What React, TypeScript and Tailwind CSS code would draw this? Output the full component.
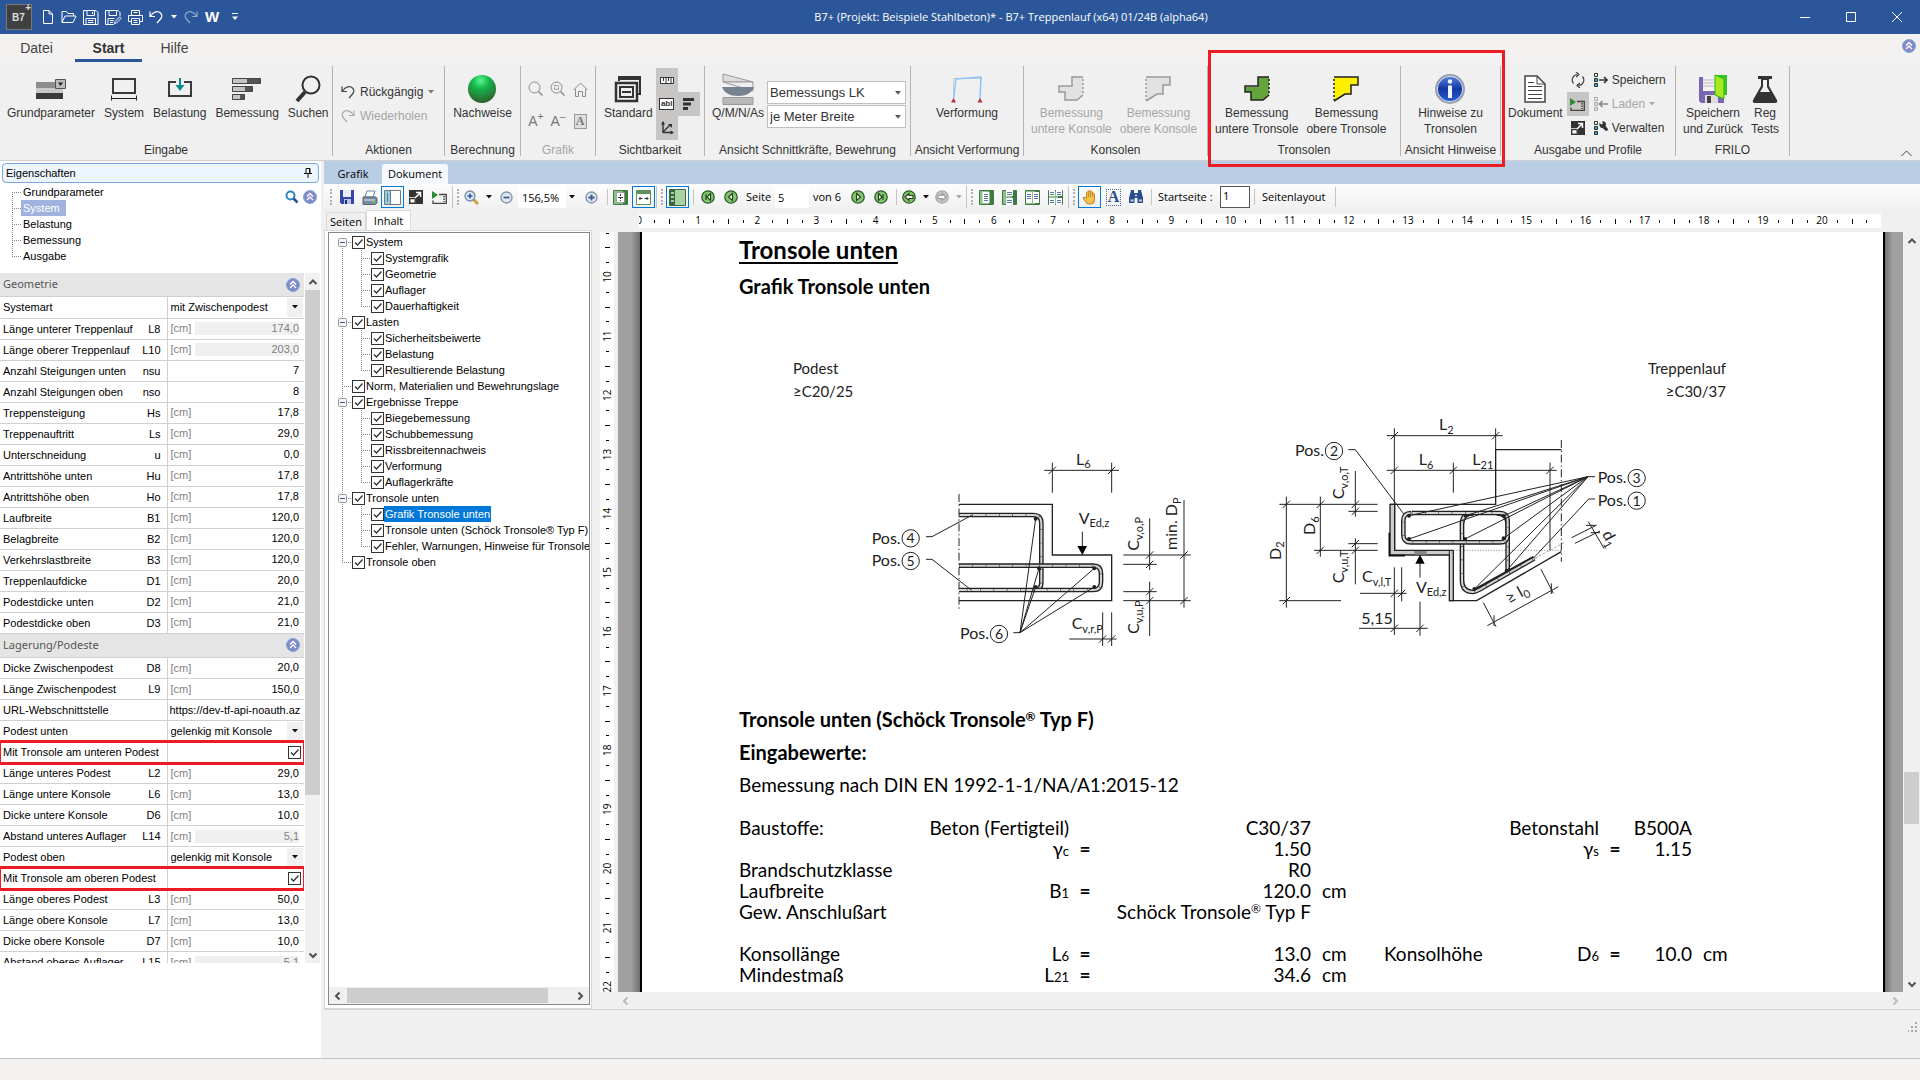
import type { ReactNode } from "react";

type PropertyRow = {
  label: string;
  symbol?: string;
  unit?: string;
  value?: string;
  disabled?: boolean;
  kind?: "number" | "select" | "text" | "check";
  mark?: boolean;
};

const GEOMETRY: PropertyRow[] = [
  { label: "Systemart", value: "mit Zwischenpodest", kind: "select" },
  { label: "Länge unterer Treppenlauf", symbol: "L8", unit: "[cm]", value: "174,0", disabled: true },
  { label: "Länge oberer Treppenlauf", symbol: "L10", unit: "[cm]", value: "203,0", disabled: true },
  { label: "Anzahl Steigungen unten", symbol: "nsu", value: "7" },
  { label: "Anzahl Steigungen oben", symbol: "nso", value: "8" },
  { label: "Treppensteigung", symbol: "Hs", unit: "[cm]", value: "17,8" },
  { label: "Treppenauftritt", symbol: "Ls", unit: "[cm]", value: "29,0" },
  { label: "Unterschneidung", symbol: "u", unit: "[cm]", value: "0,0" },
  { label: "Antrittshöhe unten", symbol: "Hu", unit: "[cm]", value: "17,8" },
  { label: "Antrittshöhe oben", symbol: "Ho", unit: "[cm]", value: "17,8" },
  { label: "Laufbreite", symbol: "B1", unit: "[cm]", value: "120,0" },
  { label: "Belagbreite", symbol: "B2", unit: "[cm]", value: "120,0" },
  { label: "Verkehrslastbreite", symbol: "B3", unit: "[cm]", value: "120,0" },
  { label: "Treppenlaufdicke", symbol: "D1", unit: "[cm]", value: "20,0" },
  { label: "Podestdicke unten", symbol: "D2", unit: "[cm]", value: "21,0" },
  { label: "Podestdicke oben", symbol: "D3", unit: "[cm]", value: "21,0" },
];

const SUPPORTS: PropertyRow[] = [
  { label: "Dicke Zwischenpodest", symbol: "D8", unit: "[cm]", value: "20,0" },
  { label: "Länge Zwischenpodest", symbol: "L9", unit: "[cm]", value: "150,0" },
  { label: "URL-Webschnittstelle", value: "https://dev-tf-api-noauth.az", kind: "text" },
  { label: "Podest unten", value: "gelenkig mit Konsole", kind: "select" },
  { label: "Mit Tronsole am unteren Podest", kind: "check", mark: true },
  { label: "Länge unteres Podest", symbol: "L2", unit: "[cm]", value: "29,0" },
  { label: "Länge untere Konsole", symbol: "L6", unit: "[cm]", value: "13,0" },
  { label: "Dicke untere Konsole", symbol: "D6", unit: "[cm]", value: "10,0" },
  { label: "Abstand unteres Auflager", symbol: "L14", unit: "[cm]", value: "5,1", disabled: true },
  { label: "Podest oben", value: "gelenkig mit Konsole", kind: "select" },
  { label: "Mit Tronsole am oberen Podest", kind: "check", mark: true },
  { label: "Länge oberes Podest", symbol: "L3", unit: "[cm]", value: "50,0" },
  { label: "Länge obere Konsole", symbol: "L7", unit: "[cm]", value: "13,0" },
  { label: "Dicke obere Konsole", symbol: "D7", unit: "[cm]", value: "10,0" },
  { label: "Abstand oberes Auflager", symbol: "L15", unit: "[cm]", value: "5,1", disabled: true },
];

const CONTENTS: { label: string; children?: string[] }[] = [
  { label: "System", children: ["Systemgrafik", "Geometrie", "Auflager", "Dauerhaftigkeit"] },
  { label: "Lasten", children: ["Sicherheitsbeiwerte", "Belastung", "Resultierende Belastung"] },
  { label: "Norm, Materialien und Bewehrungslage" },
  {
    label: "Ergebnisse Treppe",
    children: ["Biegebemessung", "Schubbemessung", "Rissbreitennachweis", "Verformung", "Auflagerkräfte"],
  },
  {
    label: "Tronsole unten",
    children: [
      "Grafik Tronsole unten",
      "Tronsole unten (Schöck Tronsole® Typ F)",
      "Fehler, Warnungen, Hinweise für Tronsole",
    ],
  },
  { label: "Tronsole oben" },
];

const SELECTED = "Grafik Tronsole unten";
const NAV = ["Grundparameter", "System", "Belastung", "Bemessung", "Ausgabe"];
const CM = 59.15;

/* ---------- small shared pieces ---------- */

function Svg({ w, h, box, children }: { w: number; h: number; box?: string; children: ReactNode }) {
  return (
    <svg width={w} height={h} viewBox={box ?? `0 0 ${w} ${h}`} fill="none" className="shrink-0" aria-hidden="true">
      {children}
    </svg>
  );
}

function Caret({ color = "#111" }: { color?: string }) {
  return (
    <Svg w={6} h={4}>
      <path d="M0 0h6L3 3.6z" fill={color} />
    </Svg>
  );
}

function Chevron({ dir, color = "#505050" }: { dir: "up" | "down" | "left" | "right"; color?: string }) {
  const d = {
    up: "M1.5 7L5 3.5 8.5 7",
    down: "M1.5 3.5L5 7l3.5-3.5",
    left: "M6.5 1.5L3 5l3.5 3.5",
    right: "M3.5 1.5L7 5 3.5 8.5",
  }[dir];
  return (
    <Svg w={10} h={10}>
      <path d={d} stroke={color} strokeWidth="2" />
    </Svg>
  );
}

function CollapseIcon() {
  return (
    <Svg w={14} h={14}>
      <circle cx="7" cy="7" r="6.5" fill="#8288c8" stroke="#7fa6d8" />
      <path d="M4 6.5l3-3 3 3M4 10l3-3 3 3" stroke="#fff" strokeWidth="1.3" />
    </Svg>
  );
}

function Check({ id, label }: { id?: string; label?: string }) {
  return (
    <span className="grid h-[13px] w-[13px] shrink-0">
      <input
        id={id}
        type="checkbox"
        defaultChecked
        aria-label={label}
        className="peer col-start-1 row-start-1 h-[13px] w-[13px] appearance-none border border-[#333] bg-white"
      />
      <svg
        viewBox="0 0 13 13"
        className="pointer-events-none invisible col-start-1 row-start-1 h-[13px] w-[13px] peer-checked:visible"
        fill="none"
        aria-hidden="true"
      >
        <path d="M3 6.5L5.5 9l5-5.5" stroke="#333" strokeWidth="1.3" />
      </svg>
    </span>
  );
}

/* ---------- title bar ---------- */

function TitleButton({ label, className, children }: { label: string; className: string; children: ReactNode }) {
  return (
    <button type="button" aria-label={label} className={`flex h-6 items-center justify-center ${className}`}>
      {children}
    </button>
  );
}

function TitleBar() {
  return (
    <header className="grid h-[34px] shrink-0 grid-cols-[1fr_auto_1fr] items-center bg-[#2b579a] text-white">
      <div className="flex items-center pl-[6px]">
        <span className="relative flex h-[26px] w-[26px] items-center border border-[#777] bg-[#404040] pl-[5px] text-[10px] font-bold text-[#ddd]">
          B7
          <span className="absolute right-0 -top-[3px] text-[10px] leading-[12px]">+</span>
        </span>
        <TitleButton label="Neu" className="ml-[8px] w-[16px]">
          <Svg w={12} h={16}>
            <path d="M1.5 1.5h5.5l3.5 3.5v9.5h-9zM7 1.5V5h3.5" stroke="#fff" />
          </Svg>
        </TitleButton>
        <TitleButton label="Öffnen" className="ml-[5px] w-[16px]">
          <Svg w={16} h={14}>
            <path d="M1 12.5V1.5h4.5l1.5 2h5.5V6M1 12.5L4 6h11l-3 6.5z" stroke="#fff" />
          </Svg>
        </TitleButton>
        <TitleButton label="Speichern" className="ml-[6px] w-[16px]">
          <Svg w={16} h={15}>
            <path d="M.5.5h12.5l2 2v12H.5zM4 .5v5h7.5v-5M3 14.5V8.5h9.5v6M5 10.5h5.5M5 12.5h5.5M9.500 2v2" stroke="#fff" />
          </Svg>
        </TitleButton>
        <TitleButton label="Speichern unter" className="ml-[6px] w-[17px]">
          <Svg w={17} h={15}>
            <path d="M9 14.5H.5V.5h12.5l2 2v4M4 .5v5h7.5v-5M3 14.5V8.5h6.5M5 10.5h3.5M5 12.5h3" stroke="#fff" />
            <path d="M9.5 13.5l.5-2 4.5-4.5 1.5 1.5-4.5 4.500z" stroke="#fff" />
          </Svg>
        </TitleButton>
        <TitleButton label="Drucken" className="ml-[5px] w-[16px]">
          <Svg w={15} h={15}>
            <path d="M3.5 5V.5h8V5M3.5 11.5H.5v-6h14v6h-3M3.5 8.5h8v6h-8zM5.5 10.5h4M5.5 12.5h4M5.5 2.5h4" stroke="#fff" />
          </Svg>
        </TitleButton>
        <TitleButton label="Rückgängig" className="ml-[5px] w-[16px]">
          <Svg w={14} h={14}>
            <path d="M1 1.5v5h5M1.5 6C4.5 1.5 9 .5 11.5 3c3 3 .5 6-3.5 10" stroke="#fff" strokeWidth="1.2" />
          </Svg>
        </TitleButton>
        <TitleButton label="Rückgängig-Liste" className="ml-[4px] w-[12px]">
          <Caret color="#fff" />
        </TitleButton>
        <TitleButton label="Wiederholen" className="ml-[3px] w-[16px]">
          <Svg w={14} h={14}>
            <path d="M13 1.5v5H8M12.5 6C9.5 1.5 5 .5 2.5 3c-3 3-.5 6 3.5 10" stroke="#8ea8cf" strokeWidth="1.2" />
          </Svg>
        </TitleButton>
        <TitleButton label="Word" className="ml-[5px] w-[16px] text-[15px] font-bold">
          W
        </TitleButton>
        <TitleButton label="Symbolleiste anpassen" className="ml-[9px] w-[12px]">
          <Svg w={6} h={8}>
            <path d="M0 .5h6" stroke="#fff" />
            <path d="M0 3.5h6L3 7z" fill="#fff" />
          </Svg>
        </TitleButton>
      </div>
      <h1 className="pl-[102px] font-['Open_Sans','Noto_Sans',sans-serif] text-[11px] leading-4">
        B7+ (Projekt: Beispiele Stahlbeton)* - B7+ Treppenlauf (x64) 01/24B (alpha64)
      </h1>
      <div className="flex justify-end">
        <TitleButton label="Minimieren" className="w-[46px]">
          <Svg w={10} h={10}>
            <path d="M0 5.5h10" stroke="#fff" />
          </Svg>
        </TitleButton>
        <TitleButton label="Maximieren" className="w-[46px]">
          <Svg w={10} h={10}>
            <path d="M.5.5h9v9h-9z" stroke="#fff" />
          </Svg>
        </TitleButton>
        <TitleButton label="Schließen" className="w-[46px]">
          <Svg w={10} h={10}>
            <path d="M0 0l10 10M10 0L0 10" stroke="#fff" />
          </Svg>
        </TitleButton>
      </div>
    </header>
  );
}

/* ---------- ribbon ---------- */

function Group({ title, className, dim, children }: { title: string; className: string; dim?: boolean; children: ReactNode }) {
  return (
    <section className={`flex h-[90px] shrink-0 flex-col justify-between border-r border-[#b4b4b4] ${className}`}>
      <div className="flex items-start pt-px">{children}</div>
      <h2 className={`h-[12px] text-center text-[12px] leading-[12px] whitespace-nowrap ${dim ? "text-[#a8a6a4]" : ""}`}>{title}</h2>
    </section>
  );
}

function BigButton({ icon, lines, dim }: { icon: ReactNode; lines: string[]; dim?: boolean }) {
  return (
    <button
      type="button"
      disabled={dim}
      className={`flex shrink-0 flex-col items-center px-[3px] text-[12px] leading-4 whitespace-nowrap ${dim ? "text-[#a8a6a4]" : ""}`}
    >
      <span className="flex h-[38px] items-center pt-[6px]">{icon}</span>
      {lines.map((line) => (
        <span key={line}>{line}</span>
      ))}
    </button>
  );
}

function SmallButton({ label, active, className = "h-6 w-[22px]", children }: { label: string; active?: boolean; className?: string; children: ReactNode }) {
  return (
    <button
      type="button"
      aria-label={label}
      className={`flex items-center justify-center ${className} ${active ? "bg-[#c8c6c4]" : ""}`}
    >
      {children}
    </button>
  );
}

function ProfileIcon({ kind }: { kind: "out" | "in" | "tool" }) {
  const fill = kind === "in" ? "#ddd" : "#35a6e6";
  const stroke = kind === "in" ? "#aaa" : "#333";
  return (
    <Svg w={14} h={14}>
      <path d="M.5.5h3v3h-3z" stroke={stroke} />
      <path d="M.5 5.5h3v3h-3zM.5 10.5h3v3h-3z" fill={fill} stroke={stroke} />
      {kind === "out" && <path d="M5 7h8M10 4l3 3-3 3" stroke="#333" strokeWidth="1.6" />}
      {kind === "in" && <path d="M5 7h9M8.5 4l-3 3 3 3" stroke="#888" strokeWidth="1.6" />}
      {kind === "tool" && (
        <path d="M5.500 4.500a3 3 0 0 1 0-2.500l2 1.500L9 2.500 8 .5a3 3 0 0 1 3.500 4.500l2.500 3q0 2-2 2L8.500 7a3 3 0 0 1-3-2.500z" fill="#333" />
      )}
    </Svg>
  );
}

function ExportIcon({ size = 14 }: { size?: number }) {
  return (
    <Svg w={size} h={size} box="0 0 14 14">
      <path d="M0 0h14v14H7V7H0z" fill="#333" />
      <path d="M.7 8.500h5.500v4.800H.7z" fill="#fff" stroke="#333" strokeWidth="1.4" />
      <path d="M6 8l5-5M7 2.5h4.5V7" stroke="#fff" strokeWidth="1.5" />
    </Svg>
  );
}

function PlayFilmIcon() {
  return (
    <Svg w={15} h={13}>
      <path d="M0 0l6 4-6 4z" fill="#2c8a34" />
      <path d="M7 3.500h7.300v9H1V9.500" stroke="#444" strokeWidth="1.3" />
      <path d="M12 5v6" stroke="#444" strokeWidth="1.500" strokeDasharray="1.500 1" />
    </Svg>
  );
}

function RibbonSelect({ label, options }: { label: string; options: string[] }) {
  return (
    <span className="grid items-center">
      <select
        aria-label={label}
        className="col-start-1 row-start-1 h-[23px] w-[139px] appearance-none border border-[#c0c0c0] bg-white pl-[2px] text-[13px]"
      >
        {options.map((o) => (
          <option key={o}>{o}</option>
        ))}
      </select>
      <span className="pointer-events-none col-start-1 row-start-1 justify-self-end pr-[5px]">
        <Caret color="#555" />
      </span>
    </span>
  );
}

function ConsoleIcon({ fill, stroke, upper }: { fill: string; stroke: string; upper?: boolean }) {
  return (
    <Svg w={26} h={26}>
      {upper ? (
        <>
          <path d="M1 1h24v8h-7v9h-6L1 25z" fill={fill} />
          <path d="M1 1h24v8h-7v9h-6L1 25" stroke={stroke} strokeWidth="1.5" />
          <path d="M1 3v21" stroke={stroke} strokeWidth="1.5" strokeDasharray="2 2" />
        </>
      ) : (
        <>
          <path d="M25 1H14v10H1v5h6v8h12l6-5z" fill={fill} />
          <path d="M25 1H14v9H1v6h6v8h12l6-5" stroke={stroke} strokeWidth="1.5" />
          <path d="M25 3v16" stroke={stroke} strokeWidth="1.5" strokeDasharray="2 2" />
        </>
      )}
    </Svg>
  );
}

function Ribbon() {
  return (
    <div className="flex h-[99px] shrink-0 items-start border-b border-[#cfcfcf] bg-[#f0f0f0] pt-[4px] text-[#333]">
      <Group title="Eingabe" className="w-[333px]">
        <div className="flex gap-[3px] pl-[4px]">
          <BigButton
            lines={["Grundparameter"]}
            icon={
              <Svg w={31} h={20}>
                <path d="M0 3h27v6H0z" fill="#8e8e8e" />
                <path d="M0 9h27v6H0z" fill="#c9c9c9" />
                <path d="M0 14h27v6H0z" fill="#3a3a3a" />
                <path d="M19.5.5h10v9h-10z" fill="#bbb" stroke="#555" />
                <path d="M22 3.5h5L24.5 7z" fill="#222" />
              </Svg>
            }
          />
          <BigButton
            lines={["System"]}
            icon={
              <Svg w={26} h={24}>
                <path d="M2 2h22v14H2z" stroke="#3a3a3a" strokeWidth="2" />
                <path d="M0 21.5h26M.5 18.5v5M25.5 18.5v5" stroke="#222" />
              </Svg>
            }
          />
          <BigButton
            lines={["Belastung"]}
            icon={
              <Svg w={26} h={24}>
                <path d="M9 5H2v14h22V5h-7" stroke="#3a3a3a" strokeWidth="2" />
                <path d="M13 1v9" stroke="#0e8b8b" strokeWidth="2" />
                <path d="M8.5 8h9L13 14z" fill="#0e8b8b" />
              </Svg>
            }
          />
          <BigButton
            lines={["Bemessung"]}
            icon={
              <Svg w={30} h={24}>
                <path d="M.5 1.5h28v5H.5zM.5 9.5h20v5H.5zM.5 17.5h12v5H.5z" fill="#555" stroke="#444" />
                <path d="M1 2h14v4H1zM1 10h12v4H1zM1 18h7v4H1z" fill="#c4c4c4" />
              </Svg>
            }
          />
          <BigButton
            lines={["Suchen"]}
            icon={
              <Svg w={28} h={28}>
                <circle cx="17" cy="10" r="8.5" stroke="#333" strokeWidth="2" />
                <path d="M11 17l-8 9" stroke="#333" strokeWidth="4" />
              </Svg>
            }
          />
        </div>
      </Group>

      <Group title="Aktionen" className="w-[112px]">
        <div className="flex flex-col pt-[13px] pl-[8px] text-[12px]">
          <button type="button" className="flex h-6 items-center gap-[5px]">
            <Svg w={14} h={14}>
              <path d="M1 1.5v5h5M1.5 6C4.5 1.5 9 .5 11.5 3c3 3 .5 6-3.5 10" stroke="#444" strokeWidth="1.2" />
            </Svg>
            Rückgängig
            <Caret color="#777" />
          </button>
          <button type="button" disabled className="flex h-6 items-center gap-[5px] text-[#a8a6a4]">
            <Svg w={14} h={14}>
              <path d="M13 1.5v5H8M12.5 6C9.5 1.5 5 .5 2.5 3c-3 3-.5 6 3.5 10" stroke="#aaa" strokeWidth="1.2" />
            </Svg>
            Wiederholen
          </button>
        </div>
      </Group>

      <Group title="Berechnung" className="w-[76px]">
        <div className="flex flex-1 justify-center">
          <BigButton
            lines={["Nachweise"]}
            icon={
              <Svg w={30} h={30}>
                <defs>
                  <radialGradient id="ball" cx=".45" cy=".2" r=".85">
                    <stop offset="0" stopColor="#5cf58f" />
                    <stop offset=".35" stopColor="#15b64c" />
                    <stop offset="1" stopColor="#31552b" />
                  </radialGradient>
                </defs>
                <circle cx="15" cy="15" r="14" fill="url(#ball)" />
              </Svg>
            }
          />
        </div>
      </Group>

      <Group title="Grafik" dim className="w-[75px]">
        <div className="grid grid-cols-3 pt-[6px] pl-[4px]">
          <SmallButton label="Zoom" className="h-[32px] w-[22px]">
            <Svg w={16} h={16}>
              <circle cx="6.5" cy="6.5" r="5.5" stroke="#8a8a8a" />
              <path d="M10.5 10.5l4 4" stroke="#8a8a8a" strokeWidth="1.5" />
            </Svg>
          </SmallButton>
          <SmallButton label="Alles zoomen" className="h-[32px] w-[22px]">
            <Svg w={16} h={16}>
              <circle cx="6.5" cy="6.5" r="5.5" stroke="#8a8a8a" />
              <path d="M4.5 4.5h4v4h-4z" stroke="#8a8a8a" strokeDasharray="2 1" />
              <path d="M10.5 10.5l4 4" stroke="#8a8a8a" strokeWidth="1.5" />
            </Svg>
          </SmallButton>
          <SmallButton label="Startansicht" className="h-[32px] w-[22px]">
            <Svg w={15} h={15}>
              <path d="M.5 8L7.5 1l7 7M2.5 7v7.5h3V9.5h4v5h3V7" stroke="#8a8a8a" />
            </Svg>
          </SmallButton>
          <SmallButton label="Schrift größer" className="h-[32px] w-[22px] text-[14px] text-[#777]">
            A<sup>+</sup>
          </SmallButton>
          <SmallButton label="Schrift kleiner" className="h-[32px] w-[22px] text-[14px] text-[#777]">
            A<sup>–</sup>
          </SmallButton>
          <SmallButton label="Schriftart" className="h-[32px] w-[22px]">
            <span className="h-[15px] w-[13px] border border-[#999] bg-[#ddd] font-['Liberation_Serif',serif] text-[12px] leading-[13px] font-bold text-[#777]">
              A
            </span>
          </SmallButton>
        </div>
      </Group>

      <Group title="Sichtbarkeit" className="w-[109px]">
        <div className="flex pl-[5px]">
          <BigButton
            lines={["Standard"]}
            icon={
              <Svg w={28} h={28}>
                <path d="M5 6V2h21v17h-3" stroke="#333" strokeWidth="2" />
                <path d="M4 1h23v4H4z" fill="#333" />
                <path d="M2 8h21v18H2z" stroke="#333" strokeWidth="2.5" />
                <path d="M6 12h13v10H6zM8 17h9" stroke="#333" strokeWidth="2" />
              </Svg>
            }
          />
          <div className="flex flex-col pt-px">
            <SmallButton label="Bemaßung" active>
              <Svg w={14} h={7}>
                <path d="M.5.5h13v6H.5z" fill="#fff" stroke="#333" />
                <path d="M3.500 0v4M6 0v7M8.500 0v4M11 0v7" stroke="#333" />
              </Svg>
            </SmallButton>
            <div className="flex">
              <SmallButton label="Beschriftung" active>
                <span className="border border-[#333] bg-white px-px text-[8px] leading-[10px] font-bold">abl</span>
              </SmallButton>
              <SmallButton label="Balken" active>
                <Svg w={11} h={12}>
                  <path d="M0 0h11v3H0zM0 4.5h8v3H0zM0 9h5v3H0z" fill="#333" />
                </Svg>
              </SmallButton>
            </div>
            <SmallButton label="Achsen" active>
              <Svg w={14} h={14}>
                <path d="M3 1v10.5h10M3 11l7-7" stroke="#333" strokeWidth="1.4" />
                <path d="M1 3.5L3 0l2 3.5zM10.5 9.5L14 11.5l-3.5 2zM8 3h4v4z" fill="#333" />
              </Svg>
            </SmallButton>
          </div>
        </div>
      </Group>

      <Group title="Ansicht Schnittkräfte, Bewehrung" className="w-[206px]">
        <div className="flex pl-[4px]">
          <BigButton
            lines={["Q/M/N/As"]}
            icon={
              <Svg w={33} h={32}>
                <path d="M1 9V1l30 8z" fill="#ddd" stroke="#999" />
                <path d="M1 9h30v9z" fill="#eee" stroke="#999" />
                <path d="M0 14h32c-2 6-8 9-16 9S2 20 0 14z" fill="#76828f" />
                <path d="M1 24.500h30v7H1z" fill="#b9b9b9" stroke="#999" />
              </Svg>
            }
          />
          <div className="flex flex-col gap-px pt-[14px]">
            <RibbonSelect label="Lastkombination" options={["Bemessungs LK"]} />
            <RibbonSelect label="Bezug" options={["je Meter Breite"]} />
          </div>
        </div>
      </Group>

      <Group title="Ansicht Verformung" className="w-[113px]">
        <div className="flex flex-1 justify-center">
          <BigButton
            lines={["Verformung"]}
            icon={
              <Svg w={34} h={27}>
                <path d="M3.5 24V2.5h27V24" stroke="#ccc" />
                <path d="M3.5 24L6 3l25-2-1 23" stroke="#8cc4fa" strokeWidth="1.5" />
                <path d="M1 26.5l2.5-4.5L6 26.5zM27.5 26.5l2.5-4.5 2.5 4.5z" fill="#b33" />
              </Svg>
            }
          />
        </div>
      </Group>

      <Group title="Konsolen" className="w-[184px]">
        <div className="flex gap-[2px] pl-[4px]">
          <BigButton dim lines={["Bemessung", "untere Konsole"]} icon={<ConsoleIcon fill="#e2e2e2" stroke="#999" />} />
          <BigButton dim lines={["Bemessung", "obere Konsole"]} icon={<ConsoleIcon upper fill="#e2e2e2" stroke="#999" />} />
        </div>
      </Group>

      <div className="relative flex">
        <Group title="Tronsolen" className="w-[193px]">
          <div className="flex gap-[2px] pl-[4px]">
            <BigButton lines={["Bemessung", "untere Tronsole"]} icon={<ConsoleIcon fill="#65a43b" stroke="#222" />} />
            <BigButton lines={["Bemessung", "obere Tronsole"]} icon={<ConsoleIcon upper fill="#fff000" stroke="#222" />} />
          </div>
        </Group>
        <Group title="Ansicht Hinweise" className="w-[100px]">
          <div className="flex flex-1 justify-center">
            <BigButton
              lines={["Hinweise zu", "Tronsolen"]}
              icon={
                <Svg w={32} h={32}>
                  <defs>
                    <linearGradient id="info" x1="0" y1="0" x2="0" y2="1">
                      <stop offset="0" stopColor="#5c88e0" />
                      <stop offset=".5" stopColor="#1238a4" />
                      <stop offset="1" stopColor="#2f62d8" />
                    </linearGradient>
                  </defs>
                  <circle cx="16" cy="16" r="14" fill="url(#info)" stroke="#9a9fa8" strokeWidth="2" />
                  <circle cx="16" cy="16" r="12.700" stroke="#dfe6f4" />
                  <circle cx="16" cy="8.5" r="2.2" fill="#eef1f8" />
                  <path d="M14 12.500h4V25h-4z" fill="#eef1f8" />
                </Svg>
              }
            />
          </div>
        </Group>
        <div className="pointer-events-none absolute -right-[4px] -top-[16px] left-0 h-[117px] border-[3px] border-[#ed1c24]" />
      </div>

      <Group title="Ausgabe und Profile" className="w-[175px]">
        <div className="flex pl-[4px]">
          <BigButton
            lines={["Dokument"]}
            icon={
              <Svg w={22} h={28}>
                <path d="M1 1h12l8 8v18H1z" fill="#fff" stroke="#444" strokeWidth="1.5" />
                <path d="M13 1v8h8M4 7.5h6M4 11.5h14M4 15.5h14M4 19.5h14M4 23.5h14" stroke="#444" />
              </Svg>
            }
          />
          <div className="flex flex-col pt-px pl-px">
            <SmallButton label="Aktualisieren">
              <Svg w={14} h={16}>
                <path d="M2.5 11.5a5.5 5.5 0 0 1 4-9M11.5 4.5a5.5 5.5 0 0 1-4 9M5 0l3 2.5L5 5M9 11l-3 2.5L9 16" stroke="#444" strokeWidth="1.2" />
              </Svg>
            </SmallButton>
            <SmallButton label="Vorschau" active>
              <PlayFilmIcon />
            </SmallButton>
            <SmallButton label="Exportieren">
              <ExportIcon />
            </SmallButton>
          </div>
          <div className="flex flex-col pt-px pl-[5px] text-[12px]">
            <button type="button" className="flex h-6 items-center gap-[4px]">
              <ProfileIcon kind="out" />
              Speichern
            </button>
            <button type="button" disabled className="flex h-6 items-center gap-[4px] text-[#a8a6a4]">
              <ProfileIcon kind="in" />
              Laden
              <Caret color="#aaa" />
            </button>
            <button type="button" className="flex h-6 items-center gap-[4px]">
              <ProfileIcon kind="tool" />
              Verwalten
            </button>
          </div>
        </div>
      </Group>

      <Group title="FRILO" className="w-[114px]">
        <div className="flex gap-[2px] pl-[4px]">
          <BigButton
            lines={["Speichern", "und Zurück"]}
            icon={
              <Svg w={30} h={30}>
                <path d="M1 3h25v26H3l-2-2z" fill="#7a66b0" />
                <path d="M5 3h13v14H5z" fill="#f2f2f2" />
                <path d="M5 6h12M5 9h12M5 12h12" stroke="#bbb" />
                <path d="M7 21h13v8H7z" fill="#ddd" />
                <path d="M9 22h4v7H9z" fill="#444" />
                <path d="M17 1h12v20h-4V6z" fill="#35c524" />
                <path d="M17 1l9 4v20l-9-4z" fill="#a6ea1e" stroke="#2fb51e" />
              </Svg>
            }
          />
          <BigButton
            lines={["Reg", "Tests"]}
            icon={
              <Svg w={26} h={28}>
                <path d="M6 1h14v3H6z" fill="#333" />
                <path d="M9 3v8L1 25q-1 3 2 3h20q3 0 2-3L17 11V3z" fill="#333" />
                <path d="M11 5h4v7l3 5H8l3-5z" fill="#f0f0f0" />
              </Svg>
            }
          />
        </div>
      </Group>

      <button type="button" aria-label="Menüband verkleinern" className="ml-auto self-end pr-[8px] pb-[3px]">
        <Svg w={11} h={7}>
          <path d="M.5 6L5.5 1l5 5" stroke="#444" />
        </Svg>
      </button>
    </div>
  );
}

/* ---------- property panel ---------- */

function PropertyTable({ rows }: { rows: PropertyRow[] }) {
  return (
    <table className="w-full table-fixed border-collapse">
      <colgroup>
        <col className="w-[167px]" />
        <col />
      </colgroup>
      <tbody>
        {rows.map((row) => {
          const id = `p-${row.label.replace(/\s/g, "-")}`;
          return (
            <tr key={row.label} className={`h-[21px] ${row.mark ? "outline-[3px] -outline-offset-1 outline-[#ed1c24]" : ""}`}>
              <th scope="row" className="h-[21px] border-r border-b border-[#d0d0d0] p-0 text-left font-normal">
                <label htmlFor={id} className="flex justify-between pr-[6px] pl-[3px] leading-[20px] whitespace-nowrap">
                  <span>{row.label}</span>
                  <span>{row.symbol}</span>
                </label>
              </th>
              <td className="h-[21px] border-b border-[#d0d0d0] p-0">
                {row.kind === "select" ? (
                  <span className="grid h-[20px] items-center">
                    <select id={id} className="col-start-1 row-start-1 h-[20px] appearance-none pl-[3px]">
                      <option>{row.value}</option>
                    </select>
                    <span className="pointer-events-none col-start-1 row-start-1 mr-px flex h-[19px] w-[16px] items-center justify-center justify-self-end bg-[#f0f0f0]">
                      <Caret />
                    </span>
                  </span>
                ) : row.kind === "check" ? (
                  <span className="flex justify-end pr-[3px]">
                    <Check id={id} />
                  </span>
                ) : (
                  <span className={`flex items-center gap-[4px] ${row.kind === "text" ? "pl-[2px]" : "pr-[5px] pl-[3px]"}`}>
                    {row.unit && <span className="text-[#808080]">{row.unit}</span>}
                    <input
                      id={id}
                      defaultValue={row.value}
                      disabled={row.disabled}
                      className={`h-[13px] w-0 min-w-0 flex-1 leading-[13px] ${
                        row.kind === "text" ? "text-left" : "text-right"
                      } ${row.disabled ? "bg-[#f0f0f0] text-[#808080]" : ""}`}
                    />
                  </span>
                )}
              </td>
            </tr>
          );
        })}
      </tbody>
    </table>
  );
}

function SectionHeader({ title }: { title: string }) {
  return (
    <h3 className="flex h-[24px] items-center justify-between border-b border-[#d0d0d0] bg-[#e5e5e5] pr-[4px] pl-[3px] font-['Noto_Sans',sans-serif] text-[11px] text-[#555]">
      {title}
      <button type="button" aria-label={`${title} einklappen`}>
        <CollapseIcon />
      </button>
    </h3>
  );
}

function PropertyPanel() {
  return (
    <aside className="flex w-[321px] shrink-0 flex-col bg-white">
      <div className="mx-[2px] mt-[2px] flex h-[20px] shrink-0 items-center justify-between rounded-sm border border-[#7da7e0] bg-[#edf5fe] pr-[6px] pl-[3px]">
        <h2>Eigenschaften</h2>
        <button type="button" aria-label="Anheften">
          <Svg w={8} h={10}>
            <path d="M2 .5h4v5H2zM0 5.5h8M4 5.5V10M5.5 1v5" stroke="#111" />
          </Svg>
        </button>
      </div>
      <div className="flex h-[90px] shrink-0 items-start pt-px">
        <nav className="flex-1">
          <ul>
            {NAV.map((item, i) => (
              <li key={item} className="flex h-4 items-center pl-[12px]">
                <Svg w={9} h={16}>
                  <path
                    d={`M.5 ${i === 0 ? 8 : 0}V${i === NAV.length - 1 ? 8 : 16}M0 8.5h9`}
                    stroke="#888"
                    strokeDasharray="1 1"
                  />
                </Svg>
                <a
                  href={`#${item}`}
                  className={`h-4 px-[2px] leading-4 ${item === "System" ? "bg-[#a0b3de] pr-[6px] text-white" : ""}`}
                >
                  {item}
                </a>
              </li>
            ))}
          </ul>
        </nav>
        <div className="flex gap-[4px] pt-[6px] pr-[4px]">
          <button type="button" aria-label="Suchen">
            <Svg w={14} h={14}>
              <circle cx="5.5" cy="5.5" r="4" stroke="#2f86c6" strokeWidth="2" />
              <path d="M8.5 8.5l4 4" stroke="#2b4f8f" strokeWidth="2.5" />
            </Svg>
          </button>
          <button type="button" aria-label="Alle einklappen">
            <CollapseIcon />
          </button>
        </div>
      </div>
      <div className="flex min-h-0 flex-1 pb-[95px]">
        <div className="w-[304px] overflow-hidden">
          <SectionHeader title="Geometrie" />
          <PropertyTable rows={GEOMETRY} />
          <SectionHeader title="Lagerung/Podeste" />
          <PropertyTable rows={SUPPORTS} />
        </div>
        <div className="ml-px flex w-[15px] flex-col items-center bg-[#f0f0f0]">
          <span className="flex h-[17px] items-center">
            <Chevron dir="up" />
          </span>
          <span className="min-h-0 w-full flex-1">
            <span className="block h-[77%] bg-[#cdcdcd]" />
          </span>
          <span className="flex h-[17px] items-center">
            <Chevron dir="down" />
          </span>
        </div>
      </div>
    </aside>
  );
}

/* ---------- document toolbar ---------- */

function Tool({ label, active, className = "mx-[1px]", children }: { label: string; active?: boolean; className?: string; children: ReactNode }) {
  return (
    <button
      type="button"
      aria-label={label}
      className={`flex h-[22px] w-[23px] shrink-0 items-center justify-center ${className} ${
        active ? "border border-[#0078d7]" : ""
      }`}
    >
      {children}
    </button>
  );
}

function CaretTool({ label, dim }: { label: string; dim?: boolean }) {
  return (
    <button type="button" aria-label={label} className="flex h-[22px] w-[12px] items-center justify-center">
      <Caret color={dim ? "#aaa" : "#111"} />
    </button>
  );
}

function Sep() {
  return <span className="mx-[4px] h-[16px] w-px bg-[#c4c4c4]" />;
}

function Grip() {
  return (
    <span className="ml-[1px] flex items-center gap-[4px]">
      <span className="h-[22px] w-px bg-[#c4c4c4]" />
      <span className="h-[16px] border-l-2 border-dotted border-[#b0b0b0]" />
    </span>
  );
}

function GreenSquare({ children }: { children?: ReactNode }) {
  return (
    <Svg w={15} h={15}>
      <rect width="15" height="15" rx="1" fill="#3f7a45" />
      <path d="M1 1h9v13H1z" fill="#8fc08c" />
      {children}
    </Svg>
  );
}

function GreenRound({ d, dim }: { d: string; dim?: boolean }) {
  return (
    <Svg w={14} h={14}>
      <circle cx="7" cy="7" r="6.2" fill={dim ? "#c4c4c4" : "#83c56c"} stroke={dim ? "#aaa" : "#2d5c2c"} strokeWidth="1.300" />
      <path d={d} fill="#fff" stroke={dim ? "#999" : "#1f3f1f"} strokeWidth="1.100" />
    </Svg>
  );
}

function ZoomRound({ plus }: { plus?: boolean }) {
  return (
    <Svg w={13} h={13}>
      <circle cx="6.5" cy="6.5" r="5.5" fill="#dfe6f0" stroke="#8393ab" strokeWidth="1.3" />
      <path d={plus ? "M3.5 6.5h6M6.5 3.5v6" : "M3.5 6.5h6"} stroke="#3d5a94" strokeWidth="1.8" />
    </Svg>
  );
}

function DocumentToolbar() {
  return (
    <div className="flex h-[26px] shrink-0 items-center bg-linear-to-b from-[#fdfdfd] to-[#f0f0f0] pl-[6px] font-['Open_Sans','Noto_Sans',sans-serif] text-[11px]">
      <span className="h-[16px] border-l-2 border-dotted border-[#b0b0b0]" />
      <Tool label="Speichern" className="ml-[3px]">
        <Svg w={14} h={14}>
          <path d="M0 0h14v14H1.5L0 12.5z" fill="#3846a8" />
          <path d="M3 0h8v7H3z" fill="#e9edfa" />
          <path d="M4 9h7v5H4z" fill="#b9c2e6" />
          <path d="M5 10h2v4H5z" fill="#222c70" />
        </Svg>
      </Tool>
      <Tool label="Drucken" className="">
        <Svg w={16} h={15}>
          <path d="M5 1h8l-2 6H3z" fill="#fff" stroke="#6c86a8" />
          <path d="M1 7h13l1 2v4l-2 1.500H1z" fill="#7d8c9c" stroke="#56677a" />
          <path d="M2 10h11" stroke="#dfe6ee" />
          <path d="M10 12h3" stroke="#58d046" strokeWidth="1.5" />
        </Svg>
      </Tool>
      <Tool label="Navigation" active className="">
        <Svg w={17} h={15}>
          <path d="M.5.5h16v14H.5z" fill="#fff" stroke="#777" />
          <path d="M1 1h5v13H1z" fill="#8ed0ea" />
          <path d="M6.5 1v13M3.5 3v9" stroke="#777" />
        </Svg>
      </Tool>
      <Tool label="Exportieren" className="">
        <ExportIcon />
      </Tool>
      <Tool label="Vorschau" className="ml-[1px]">
        <PlayFilmIcon />
      </Tool>
      <Grip />
      <Tool label="Zoom" className="ml-[1px]">
        <Svg w={15} h={15}>
          <path d="M9 9l5 5" stroke="#d2a33c" strokeWidth="3" />
          <circle cx="6" cy="6" r="5" fill="#dbe6f3" stroke="#7a8ba5" strokeWidth="1.3" />
          <path d="M3.5 6h5M6 3.5v5" stroke="#2b5aa6" strokeWidth="1.5" />
        </Svg>
      </Tool>
      <CaretTool label="Zoomliste" />
      <Tool label="Verkleinern" className="">
        <ZoomRound />
      </Tool>
      <input aria-label="Zoomstufe" defaultValue="156,5%" className="h-[22px] w-[48px] bg-white pl-[4px]" />
      <CaretTool label="Zoomstufen" />
      <Tool label="Vergrößern" className="ml-[2px]">
        <ZoomRound plus />
      </Tool>
      <Sep />
      <Tool label="Ganze Seite" className="-ml-[3px]">
        <GreenSquare>
          <path d="M3.5 2.5h8v10h-8z" fill="#fff" stroke="#777" strokeDasharray="1 1" />
          <path d="M7.5 4v7M5 7.5h5" stroke="#333" strokeDasharray="2 1" />
        </GreenSquare>
      </Tool>
      <Tool label="Seitenbreite" active className="">
        <Svg w={15} h={15}>
          <rect width="15" height="15" rx="1" fill="#5c915e" />
          <path d="M1 4h13v10H1z" fill="#fff" />
          <path d="M3 8.5h3.5M8.5 8.5H12M4.5 7L3 8.5 4.5 10M10.5 7L12 8.5 10.5 10" stroke="#333" />
        </Svg>
      </Tool>
      <Grip />
      <Tool label="Gliederung" active className="ml-[3px]">
        <Svg w={17} h={17}>
          <path d="M.5.5h16v16H.5z" fill="#a9d3a2" stroke="#3d6d3e" />
          <path d="M1 1h5v15H1z" fill="#356937" />
          <path d="M2 4h3M2 8h3M2 12h3" stroke="#cfe7cb" strokeWidth="1.5" />
        </Svg>
      </Tool>
      <Sep />
      <Tool label="Erste Seite" className="-ml-[2px]">
        <GreenRound d="M5 4v6M9.5 3.5L6 7l3.5 3.5z" />
      </Tool>
      <Tool label="Vorige Seite" className="">
        <GreenRound d="M8.5 3.5L4.5 7l4 3.5z" />
      </Tool>
      <label htmlFor="page" className="ml-[4px] w-[29px]">
        Seite
      </label>
      <input id="page" defaultValue="5" className="h-[22px] w-[34px] bg-white pl-[3px]" />
      <span className="ml-[4px] w-[33px] whitespace-nowrap">von 6</span>
      <Tool label="Nächste Seite" className="">
        <GreenRound d="M5.5 3.5l4 3.5-4 3.5z" />
      </Tool>
      <Tool label="Letzte Seite" className="">
        <GreenRound d="M9 4v6M4.5 3.5L8 7l-3.5 3.5z" />
      </Tool>
      <Sep />
      <Tool label="Zurück" className="-ml-[4px]">
        <GreenRound d="M3 7l4-3.5v2h4v3H7v2z" />
      </Tool>
      <CaretTool label="Verlauf zurück" />
      <Tool label="Vor" className="-ml-[2px]">
        <GreenRound dim d="M11 7L7 3.5v2H3v3h4v2z" />
      </Tool>
      <CaretTool label="Verlauf vor" dim />
      <Grip />
      <Tool label="Einzelseite" className="ml-[2px]">
        <GreenSquare>
          <path d="M3.5 2h7v11h-7z" fill="#fff" />
          <path d="M5 4.5h4M5 6.5h4M5 8.5h4M5 10.5h4" stroke="#5a79a8" />
        </GreenSquare>
      </Tool>
      <Tool label="Fortlaufend" className="">
        <GreenSquare>
          <path d="M4 0h7v6H4zM4 8h7v7H4z" fill="#fff" />
          <path d="M5 2.5h5M5 4.5h5M5 10.5h5M5 12.5h5" stroke="#5a79a8" />
        </GreenSquare>
      </Tool>
      <Tool label="Doppelseite" className="">
        <GreenSquare>
          <path d="M1 2h6v11H1zM8 2h6v11H8z" fill="#fff" />
          <path d="M2 4.5h4M2 6.5h4M2 8.5h4M9 4.5h4M9 6.5h4M9 8.5h4" stroke="#5a79a8" />
        </GreenSquare>
      </Tool>
      <Tool label="Doppelseite fortlaufend" className="">
        <GreenSquare>
          <path d="M1 0h6v6H1zM8 0h6v6H8zM1 8h6v7H1zM8 8h6v7H8z" fill="#fff" />
          <path d="M2 2.5h4M2 4.5h4M9 2.5h4M9 4.5h4M2 10.5h4M9 10.5h4M2 12.5h4M9 12.5h4" stroke="#5a79a8" />
        </GreenSquare>
      </Tool>
      <Grip />
      <Tool label="Hand" active className="ml-[3px]">
        <Svg w={15} h={16}>
          <path
            d="M4.5 9V3.5q1-1.5 2 0V2q1-1.5 2 0v1q1-1.5 2 0v2q1-1.5 2 0v6q0 4-4 4H7Q4.5 15 3 12L1 9q.5-1.5 2-.5z"
            fill="#f2c14c"
            stroke="#b9832a"
          />
          <path d="M6.5 4v4M8.5 3v5M10.5 5v3" stroke="#b9832a" strokeWidth=".8" />
        </Svg>
      </Tool>
      <Tool label="Text auswählen" className="ml-[1px]">
        <span className="flex h-[17px] w-[15px] items-center justify-center border border-dotted border-[#4c6d9c] font-['Liberation_Serif',serif] text-[16px] leading-[16px] font-bold text-[#274d8e]">
          A
        </span>
      </Tool>
      <Tool label="Suchen" className="-ml-px">
        <Svg w={16} h={14}>
          <path d="M3 0h3v3h4V0h3l2 8v5H9.5V8h-3v5H1V8z" fill="#2b4d8d" />
          <path d="M2.5 9.5h3v2h-3zM11 9.5h3v2h-3zM7 4.500h2v2H7z" fill="#b4cbec" />
        </Svg>
      </Tool>
      <Sep />
      <label htmlFor="start" className="ml-[2px] w-[62px]">
        Startseite :
      </label>
      <input id="start" defaultValue="1" className="h-[22px] w-[30px] border border-[#555] bg-white pb-[3px] pl-[2px]" />
      <Sep />
      <button type="button" className="px-[3px]">
        Seitenlayout
      </button>
      <span className="ml-[6px] h-[20px] w-px bg-[#c4c4c4]" />
    </div>
  );
}

/* ---------- contents tree ---------- */

function TreeLines({ path, boxed }: { path: string; boxed?: boolean }) {
  return (
    <Svg w={19} h={16}>
      <path d={path} stroke="#888" strokeDasharray="1 1" />
      {boxed && (
        <>
          <rect x="5.5" y="4.5" width="8" height="8" rx="1" fill="#f4f4f4" stroke="#999" />
          <path d="M7 8.5h5" stroke="#3b5fa8" />
        </>
      )}
    </Svg>
  );
}

function ContentsTree() {
  return (
    <ul className="flex-1 overflow-hidden pt-px text-[11px]">
      {CONTENTS.map((node, i) => {
        const last = i === CONTENTS.length - 1;
        const trunk = `M9.5 ${i === 0 ? 8 : 0}V${last ? 8 : 16}M9 8.5h10`;
        return (
          <li key={node.label}>
            <div className="flex h-4 items-center pl-[4px]">
              <TreeLines path={trunk} boxed={!!node.children} />
              <Check label={node.label} />
              <span className="px-px whitespace-nowrap">{node.label}</span>
            </div>
            {node.children && (
              <ul>
                {node.children.map((child, j) => (
                  <li key={child} className="flex h-4 items-center pl-[4px]">
                    <TreeLines path="M9.5 0V16" />
                    <TreeLines path={`M9.5 0V${j === node.children!.length - 1 ? 8 : 16}M9 8.5h10`} />
                    <Check label={child} />
                    <span
                      className={`h-4 px-px leading-4 whitespace-nowrap ${child === SELECTED ? "bg-[#0078d7] text-white" : ""}`}
                    >
                      {child}
                    </span>
                  </li>
                ))}
              </ul>
            )}
          </li>
        );
      })}
    </ul>
  );
}

function ContentsPanel() {
  return (
    <div className="flex w-[268px] shrink-0 flex-col">
      <div role="tablist" className="flex h-[20px] items-end pl-[2px] font-['Open_Sans',sans-serif] text-[11px]">
        <button type="button" role="tab" aria-selected="false" className="h-[18px] w-[40px] border border-b-0 border-[#d9d9d9] text-center leading-[17px]">
          Seiten
        </button>
        <button type="button" role="tab" aria-selected="true" className="h-[20px] w-[45px] border border-b-0 border-[#d9d9d9] bg-white leading-[17px]">
          Inhalt
        </button>
      </div>
      <div className="flex min-h-0 flex-1 flex-col border border-[#d9d9d9] bg-white pt-px pr-px pb-[3px] pl-[3px]">
        <div className="flex min-h-0 flex-1 flex-col border border-[#828790]">
          <ContentsTree />
          <div className="flex h-[17px] shrink-0 items-center bg-[#f0f0f0] px-[4px]">
            <Chevron dir="left" />
            <span className="ml-[4px] h-[15px] flex-1">
              <span className="block h-full w-[88%] bg-[#cdcdcd]" />
            </span>
            <Chevron dir="right" />
          </div>
        </div>
      </div>
    </div>
  );
}

/* ---------- rulers ---------- */

const TICKS = [0.25, 0.5, 0.75];

function HorizontalRuler() {
  return (
    <svg className="h-[14px] w-full bg-white font-['Open_Sans',sans-serif] text-[10px]" aria-hidden="true">
      {Array.from({ length: 21 }, (_, n) => (
        <g key={n}>
          <text x={n * CM} y={10} textAnchor="middle">
            {n}
          </text>
          {TICKS.map((t) => (
            <rect key={t} x={Math.round((n + t) * CM)} y={t === 0.5 ? 5 : 6} width="1" height={t === 0.5 ? 5 : 3} />
          ))}
        </g>
      ))}
    </svg>
  );
}

function VerticalRuler() {
  const offset = 45 - 10 * CM;
  return (
    <svg className="h-full w-[14px] bg-white font-['Open_Sans',sans-serif] text-[10px]" aria-hidden="true">
      {Array.from({ length: 14 }, (_, i) => {
        const n = i + 9;
        return (
          <g key={n}>
            <text transform={`translate(11 ${n * CM + offset}) rotate(-90)`} textAnchor="middle">
              {n}
            </text>
            {TICKS.map((t) => (
              <rect key={t} x={t === 0.5 ? 5 : 6} y={Math.round((n + t) * CM + offset)} width={t === 0.5 ? 5 : 3} height="1" />
            ))}
          </g>
        );
      })}
    </svg>
  );
}

/* ---------- drawings ---------- */

function Ticks({ at }: { at: [number, number][] }) {
  return <path d={at.map(([x, y]) => `M${x - 11} ${y + 11}l22-22`).join("")} stroke="#222" strokeWidth="3" />;
}

function Dots({ at }: { at: [number, number][] }) {
  return (
    <>
      {at.map(([x, y]) => (
        <circle key={`${x}-${y}`} cx={x} cy={y} r="6" fill="#222" />
      ))}
    </>
  );
}

function Rebar({ d }: { d: string }) {
  return (
    <>
      <path d={d} stroke="#222" strokeWidth="14" />
      <path d={d} stroke="#d4d4d4" strokeWidth="6" />
      <path d={d} stroke="#444" strokeWidth="7" strokeDasharray="2 38" />
    </>
  );
}

function Label({ x, y, main, sub, rotate = 0 }: { x: number; y: number; main: string; sub?: string; rotate?: number }) {
  return (
    <text transform={`translate(${x} ${y}) rotate(${rotate})`} fill="#222" fontSize="48">
      {main}
      {sub && (
        <tspan dy="11" fontSize="33">
          {sub}
        </tspan>
      )}
    </text>
  );
}

function Pos({ x, y, n }: { x: number; y: number; n: number }) {
  return (
    <g>
      <Label x={x} y={y} main="Pos." />
      <circle cx={x + 117} cy={y - 16} r="26" stroke="#222" strokeWidth="3" />
      <text x={x + 117} y={y - 1} textAnchor="middle" fill="#222" fontSize="42">
        {n}
      </text>
    </g>
  );
}

function LandingDrawing() {
  return (
    <svg viewBox="0 0 1200 720" className="mt-[30px] h-[240px] w-[400px] shrink-0" fill="none" role="img" aria-label="Podest">
      <path d="M357 192V540" stroke="#222" strokeWidth="3" strokeDasharray="24 8 4 8" />
      <path d="M357 223H637V375H815V512H357" stroke="#222" strokeWidth="4" />
      <Rebar d="M357 255H580Q604 255 604 279V458Q604 480 582 480" />
      <Rebar d="M357 407H760Q783 407 783 431V456Q783 480 760 480H357" />
      <Dots at={[[587, 266], [597, 415], [587, 471], [763, 415], [763, 471]]} />
      <path
        d="M258 320H276L395 256M258 388H276L395 481M520 608H540L587 266M540 608L597 415M540 608L587 471M540 608L763 415M540 608L763 471"
        stroke="#222"
        strokeWidth="3"
      />
      <path
        d="M613 121H837M637 98V188M815 98V188M850 375H1052M850 403H950M850 485H950M850 512H1052M929 265V420M929 455V618M1032 210V533M788 547V648M815 547V648M688 627H830M727 305V350"
        stroke="#222"
        strokeWidth="3"
      />
      <path d="M712 348h29l-14 27z" fill="#000" />
      <Ticks at={[[637, 121], [815, 121], [929, 375], [929, 403], [929, 485], [929, 512], [1032, 375], [1032, 512], [788, 627], [815, 627]]} />
      <Label x={708} y={104} main="L" sub="6" />
      <Label x={716} y={281} main="V" sub="Ed,z" />
      <Label x={695} y={598} main="C" sub="v,r,P" />
      <Label x={897} y={362} main="C" sub="v,o,P" rotate={-90} />
      <Label x={897} y={612} main="C" sub="v,u,P" rotate={-90} />
      <Label x={1012} y={360} main="min. D" sub="P" rotate={-90} />
      <Pos x={95} y={341} n={4} />
      <Pos x={95} y={409} n={5} />
      <Pos x={360} y={628} n={6} />
    </svg>
  );
}

function FlightDrawing() {
  const dots: [number, number][] = [
    [507, 347], [507, 417], [677, 347], [675, 417], [791, 348], [791, 415], [800, 512], [703, 567],
  ];
  return (
    <svg viewBox="0 0 1320 750" className="h-[250px] w-[440px] shrink-0" fill="none" role="img" aria-label="Treppenlauf">
      <path d="M464 313H450V465H628V602H640V451H464z" fill="#ccc" stroke="#222" strokeWidth="4" />
      <path d="M523 453h37v11h-37z" fill="#888" />
      <path d="M448 398V467H495" stroke="#111" strokeWidth="5" />
      <path d="M464 313V451M628 451V465" stroke="#222" strokeWidth="3" />
      <path d="M964 149H767V313H450M628 602H710L964 455" stroke="#222" strokeWidth="4" />
      <path d="M964 120V485" stroke="#222" strokeWidth="3" strokeDasharray="24 8 4 8" />
      <path d="M640 451H964" stroke="#777" strokeWidth="2" strokeDasharray="4 4" />
      <path d="M885 475L972 428" stroke="#777" strokeWidth="2" strokeDasharray="8 5" />
      <Rebar d="M700 340Q666 340 666 372V540Q666 576 700 576Q710 574 720 568L883 475" />
      <Rebar d="M770 340Q803 340 803 372V514" />
      <Rebar d="M515 339H780Q803 339 803 362V404Q803 427 780 427H513Q490 427 490 404V362Q490 339 513 339" />
      <path d="M700 570L880 470" stroke="#222" strokeWidth="5" />
      <Dots at={dots} />
      <path d={dots.map(([x, y]) => `M1044 230L${x} ${y}`).join("") + "M1044 230h21M325 149H346L490 340M1065 297H1046L880 475"} stroke="#222" strokeWidth="3" />
      <path
        d="M440 107H788M463 85V313M767 85V149M440 211H950M640 188V278M930 188V451M118 313H413M222 451H413M118 602H303M325 334H413M325 431H413M139 290V623M241 290V470M346 213V350M346 415V553M360 580H500M463 502V705M485 502V604M357 685H563M540 490V533M540 605V707"
        stroke="#222"
        strokeWidth="3"
      />
      <path d="M995 413L1070 375M1005 430L1080 393M1045 365L1092 445M903 508L940 580M730 608L768 680M742 677L955 560" stroke="#222" strokeWidth="3" />
      <path d="M1038 376h28M1052 398h28M762 646v32M934 550v32" stroke="#222" strokeWidth="3" />
      <path d="M526 491h28l-14-27z" fill="#000" />
      <Ticks
        at={[
          [463, 107], [767, 107], [463, 211], [640, 211], [930, 211], [139, 313], [139, 602], [241, 313], [241, 451],
          [346, 313], [346, 334], [346, 431], [346, 451], [463, 580], [485, 580], [463, 685], [540, 685],
        ]}
      />
      <Pos x={165} y={169} n={2} />
      <Pos x={1073} y={250} n={3} />
      <Pos x={1073} y={318} n={1} />
      <Label x={597} y={90} main="L" sub="2" />
      <Label x={536} y={196} main="L" sub="6" />
      <Label x={697} y={196} main="L" sub="21" />
      <Label x={313} y={298} main="C" sub="v,o,T" rotate={-90} />
      <Label x={313} y={550} main="C" sub="v,u,T" rotate={-90} />
      <Label x={225} y={405} main="D" sub="6" rotate={-90} />
      <Label x={122} y={480} main="D" sub="2" rotate={-90} />
      <Label x={366} y={546} main="C" sub="v,l,T" />
      <Label x={528} y={578} main="V" sub="Ed,z" />
      <Label x={364} y={671} main="5,15" />
      <Label x={1085} y={402} main="d" sub="1" rotate={62} />
      <Label x={808} y={612} main="≥ l" sub="0" rotate={-29} />
    </svg>
  );
}

/* ---------- document page ---------- */

type ResultRow = {
  label?: string;
  name?: ReactNode;
  eq?: boolean;
  value?: ReactNode;
  unit?: string;
  label2?: string;
  name2?: ReactNode;
  eq2?: boolean;
  value2?: string;
  unit2?: string;
};

function Sym({ main, sub }: { main: string; sub: string }) {
  return (
    <>
      {main}
      <span className="text-[13px] leading-none">{sub}</span>
    </>
  );
}

function Reg() {
  return <span className="align-[6px] text-[12px] leading-none">®</span>;
}

const RESULTS: ResultRow[] = [
  { label: "Baustoffe:", name: "Beton (Fertigteil)", value: "C30/37", name2: "Betonstahl", value2: "B500A" },
  { name: <Sym main="γ" sub="c" />, eq: true, value: "1.50", name2: <Sym main="γ" sub="s" />, eq2: true, value2: "1.15" },
  { label: "Brandschutzklasse", value: "R0" },
  { label: "Laufbreite", name: <Sym main="B" sub="1" />, eq: true, value: "120.0", unit: "cm" },
  { label: "Gew. Anschlußart", value: <>Schöck Tronsole<Reg /> Typ F</> },
  {},
  {
    label: "Konsollänge",
    name: <Sym main="L" sub="6" />,
    eq: true,
    value: "13.0",
    unit: "cm",
    label2: "Konsolhöhe",
    name2: <Sym main="D" sub="6" />,
    eq2: true,
    value2: "10.0",
    unit2: "cm",
  },
  { label: "Mindestmaß", name: <Sym main="L" sub="21" />, eq: true, value: "34.6", unit: "cm" },
];

function DocumentPage() {
  return (
    <article className="h-full flex-1 overflow-hidden border-x-2 border-black bg-white pl-[97px] font-['Lato',sans-serif] text-[19px] text-black">
      <h2 className="mt-[4px] text-[24px] leading-[28px] font-bold underline decoration-2 underline-offset-[3px]">Tronsole unten</h2>
      <h3 className="mt-[10px] text-[20px] leading-[24px] font-bold">Grafik Tronsole unten</h3>
      <div className="mt-[59px] flex w-[987px] justify-between pl-[54px] text-[15px] leading-[23px] text-[#222]">
        <p>
          Podest
          <br />
          ≥C20/25
        </p>
        <p className="text-right">
          Treppenlauf
          <br />
          ≥C30/37
        </p>
      </div>
      <div className="-mt-[3px] flex h-[270px] items-start pl-[101px]">
        <LandingDrawing />
        <FlightDrawing />
      </div>
      <h3 className="mt-[37px] text-[20px] leading-[24px] font-bold">
        Tronsole unten (Schöck Tronsole
        <Reg /> Typ F)
      </h3>
      <h3 className="mt-[9px] text-[20px] leading-[24px] font-bold">Eingabewerte:</h3>
      <p className="mt-[9px] leading-[24px]">Bemessung nach DIN EN 1992-1-1/NA/A1:2015-12</p>
      <table className="mt-[20px] table-fixed border-collapse leading-[20px] whitespace-nowrap">
        <colgroup>
          <col className="w-[160px]" />
          <col className="w-[170px]" />
          <col className="w-[32px]" />
          <col className="w-[210px]" />
          <col className="w-[73px]" />
          <col className="w-[110px]" />
          <col className="w-[105px]" />
          <col className="w-[32px]" />
          <col className="w-[61px]" />
          <col className="w-[50px]" />
        </colgroup>
        <tbody>
          {RESULTS.map((r, i) => (
            <tr key={i} className="h-[21px]">
              <td className="p-0">{r.label}</td>
              <td className="p-0 text-right">{r.name}</td>
              <td className="p-0 text-center font-bold">{r.eq && "="}</td>
              <td className="p-0 text-right">{r.value}</td>
              <td className="p-0 pl-[11px]">{r.unit}</td>
              <td className="p-0">{r.label2}</td>
              <td className="p-0 text-right">{r.name2}</td>
              <td className="p-0 text-center font-bold">{r.eq2 && "="}</td>
              <td className="p-0 text-right">{r.value2}</td>
              <td className="p-0 pl-[11px]">{r.unit2}</td>
            </tr>
          ))}
        </tbody>
      </table>
    </article>
  );
}

function DocumentView() {
  return (
    <main className="flex min-w-0 flex-1 flex-col pl-[8px]">
      <div className="flex h-[22px] shrink-0 items-start pt-[4px] pr-[39px] pl-[39px]">
        <HorizontalRuler />
      </div>
      <div className="flex min-h-0 flex-1">
        <div className="h-full w-[18px] shrink-0">
          <VerticalRuler />
        </div>
        <div className="flex min-w-0 flex-1">
          <div className="w-[22px] shrink-0 bg-linear-to-r from-[#a0a0a0] from-60% to-[#707070]" />
          <DocumentPage />
          <div className="w-[18px] shrink-0 bg-linear-to-l from-[#a0a0a0] from-60% to-[#707070]" />
        </div>
        <div className="flex w-[17px] shrink-0 flex-col items-center bg-[#f0f0f0]">
          <span className="flex h-[17px] items-center">
            <Chevron dir="up" />
          </span>
          <span className="flex w-full flex-1 flex-col px-px">
            <span className="basis-[72%]" />
            <span className="h-[52px] bg-[#cdcdcd]" />
          </span>
          <span className="flex h-[17px] items-center">
            <Chevron dir="down" />
          </span>
        </div>
      </div>
      <div className="flex h-[17px] shrink-0 items-center justify-between pr-[20px] pl-[21px]">
        <Chevron dir="left" color="#bbb" />
        <Chevron dir="right" color="#bbb" />
      </div>
    </main>
  );
}

export default function App() {
  return (
    <div className="flex h-screen flex-col overflow-hidden bg-[#f0f0f0] font-['Liberation_Sans',Arial,sans-serif] text-[11px] text-black">
      <TitleBar />
      <div role="tablist" className="flex h-[28px] shrink-0 items-end bg-[#f3f2f1] pl-[8px] text-[14px] text-[#444]">
        <button type="button" role="tab" aria-selected="false" className="h-[28px] w-[57px]">
          Datei
        </button>
        <button type="button" role="tab" aria-selected="true" className="ml-[10px] h-[28px] w-[67px] border-b-[3px] border-[#2b579a] pt-[3px] font-bold text-[#333]">
          Start
        </button>
        <button type="button" role="tab" aria-selected="false" className="ml-[4px] h-[28px] w-[57px]">
          Hilfe
        </button>
        <button type="button" aria-label="Hilfe anzeigen" className="mr-[4px] mb-[9px] ml-auto">
          <CollapseIcon />
        </button>
      </div>
      <Ribbon />
      <div className="flex min-h-0 flex-1">
        <PropertyPanel />
        <div className="ml-[3px] flex min-w-0 flex-1 flex-col">
          <div role="tablist" className="flex h-[23px] shrink-0 items-end bg-[#b9cde5] font-['Open_Sans',sans-serif] text-[11px]">
            <button type="button" role="tab" aria-selected="false" className="h-[20px] w-[58px]">
              Grafik
            </button>
            <button type="button" role="tab" aria-selected="true" className="h-[20px] w-[66px] rounded-t-[3px] bg-[#f5f9fe]">
              Dokument
            </button>
          </div>
          <DocumentToolbar />
          <div className="flex min-h-0 flex-1 border-b border-[#d5d5d5]">
            <ContentsPanel />
            <DocumentView />
          </div>
          <div className="flex h-[48px] shrink-0 justify-end pt-[12px] pr-[3px]">
            <Svg w={9} h={12}>
              <path d="M7 0h2v2H7zM7 4h2v2H7zM7 8h2v2H7zM3 4h2v2H3zM3 8h2v2H3zM0 8h1v2H0z" fill="#a8a8a8" />
            </Svg>
          </div>
        </div>
      </div>
      <footer className="h-[22px] shrink-0 border-t border-[#c4c4c4] bg-[#f3f2f1]" />
    </div>
  );
}
